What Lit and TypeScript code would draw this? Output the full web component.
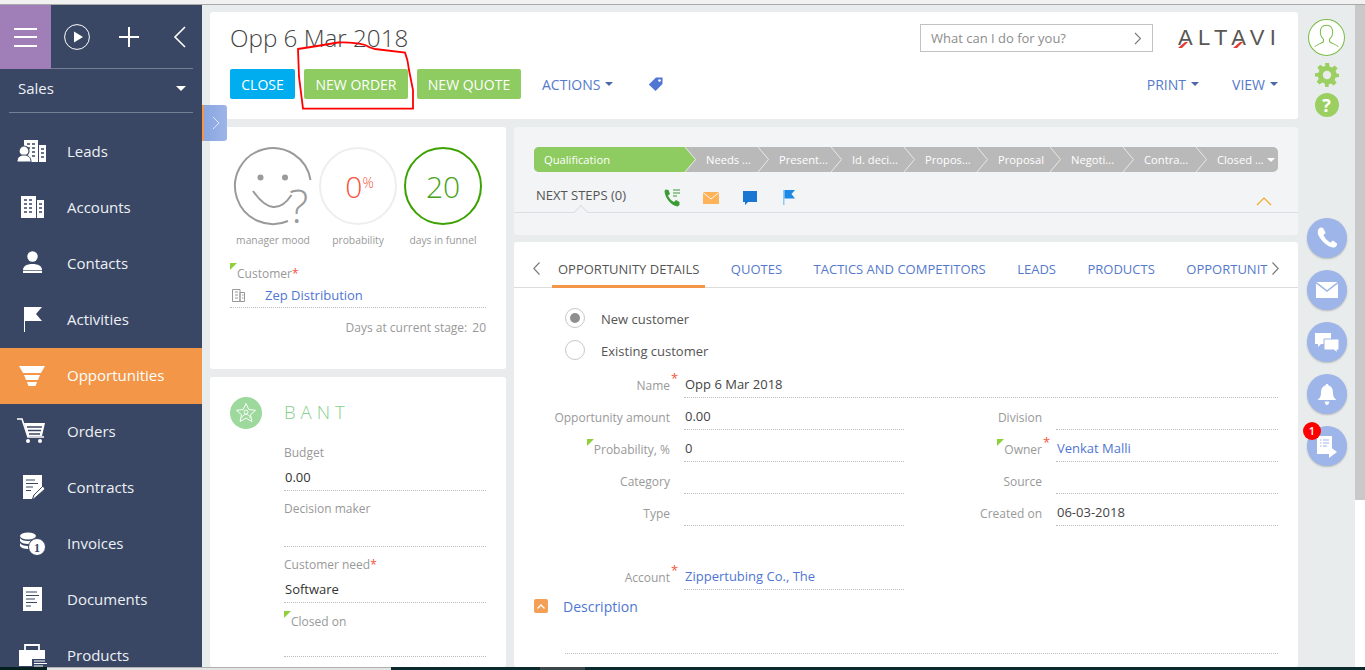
import { LitElement, html, css, svg } from "lit";
import { customElement } from "lit/decorators.js";

const BG = "#394764";
const icons: Record<string, unknown> = {
  leads: svg`<path d="M8 5h14v22H8zM23 10h7v17h-7z" fill="#fff"/><path d="M11 9h3M16 9h3M11 13h3M16 13h3M16 17h3M16 21h3M25 14h3M25 18h3M25 22h3" stroke="${BG}" stroke-width="1.4"/><circle cx="8" cy="16" r="5" fill="#fff" stroke="${BG}" stroke-width="1.2"/><path d="M1 27c0-5 3-7 7-7s7 2 7 7z" fill="#fff" stroke="${BG}" stroke-width="1"/>`,
  accounts: svg`<path d="M5 5h15v22H5zM21 9h7v18h-7z" fill="#fff"/><path d="M8 9h3M13 9h3M8 13h3M13 13h3M8 17h3M13 17h3M8 21h3M13 21h3M23 13h3M23 17h3M23 21h3" stroke="${BG}" stroke-width="1.4"/>`,
  contacts: svg`<circle cx="16.500" cy="9.500" r="5.200" fill="#fff"/><path d="M7 26v-3c0-4 4-6 9.500-6s9.500 2 9.500 6v3z" fill="#fff"/><path d="M7 23.500h19" stroke="${BG}" stroke-width=".7"/>`,
  activities: svg`<path d="M8 4h1v25H8z" fill="#fff"/><path d="M9 4h17l-6 7 6 7H9z" fill="#fff"/>`,
  opportunities: svg`<path d="M3 7h26l-4 7H7zM8 16h16l-2 5H10zM11 23h10l-1.500 4h-7z" fill="#fff"/>`,
  orders: svg`<path d="M1 4h5l6 18h16" fill="none" stroke="#fff" stroke-width="1.600"/><path d="M8 8h21l-3 13H12z" fill="#fff"/><path d="M11 12h15M12 15.500h13M13 19h11" stroke="${BG}" stroke-width="1.300"/><circle cx="12" cy="26" r="2" fill="#fff"/><circle cx="24" cy="26" r="2" fill="#fff"/>`,
  contracts: svg`<path d="M7 4h19v12l-9 9v3H7z" fill="#fff"/><path d="M10 9h9M10 12.500h12M10 16h7M10 19.500h5" stroke="${BG}" stroke-width="1.200"/><path d="M16 29l2-5 9-9 2 3-9 8z" fill="#fff" stroke="${BG}" stroke-width="1"/>`,
  invoices: svg`<ellipse cx="12" cy="9" rx="8" ry="3.500" fill="#fff"/><path d="M4 11c1 2 4 3 8 3s7-1 8-3v3c-1 2-4 3-8 3s-7-1-8-3zM4 16c1 2 4 3 8 3h2v3h-2c-4 0-7-1-8-3z" fill="#fff"/><circle cx="21" cy="20" r="8.500" fill="#fff" stroke="${BG}" stroke-width="1"/><text x="21" y="24.500" text-anchor="middle" font-family="Liberation Serif, serif" font-size="12" font-weight="700" fill="${BG}">1</text>`,
  documents: svg`<path d="M7 4h19v24H7z" fill="#fff"/><path d="M10 9h11M10 12.500h13M10 16h9M10 19.500h11M10 23h5" stroke="${BG}" stroke-width="1.200"/>`,
  products: svg`<path d="M9 11V6h14v5" fill="none" stroke="#fff" stroke-width="1.800"/><path d="M3 11h26v16H3z" fill="#fff"/><path d="M16 20h14v8H16z" fill="${BG}"/><path d="M18 22h11M18 24.500h13M18 27h9" stroke="#fff" stroke-width="1"/>`,
};
const nav = [
  ["leads", "Leads"], ["accounts", "Accounts"], ["contacts", "Contacts"], ["activities", "Activities"],
  ["opportunities", "Opportunities"], ["orders", "Orders"], ["contracts", "Contracts"], ["invoices", "Invoices"],
  ["documents", "Documents"], ["products", "Products"],
];
const steps = ["Needs ...", "Present...", "Id. deci...", "Propos...", "Proposal", "Negoti...", "Contra..."];
const tabs = ["QUOTES", "TACTICS AND COMPETITORS", "LEADS", "PRODUCTS"];

const sep = (c: string) => html`<svg class="sep" width="13" height="25" viewBox="0 0 13 25"><path d="M0 0L10.500 12.500L0 25" fill="${c}" stroke="#e9e9e9" stroke-width="1"/></svg>`;
const chev = (d: string, c: string, w = 7, h = 13) => html`<svg class="chev" width="${w}" height="${h}" viewBox="0 0 7 13"><path d="${d}" fill="none" stroke="${c}" stroke-width="1.100"/></svg>`;

@customElement("app-root")
export class AppRoot extends LitElement {
  static styles = css`
    :host { display: block; width: 1365px; height: 670px; overflow: hidden; font-family: "Open Sans", "Noto Sans", sans-serif; font-size: 13px; color: #444; background: #fff; }
    * { box-sizing: border-box; }
    .topstrip { height: 5px; background: #f1f1f1; border-bottom: 1px solid #a9a9a9; }
    .main { position: relative; display: flex; height: 662px; }
    .bottomstrip { display: flex; height: 3px; }
    .b1 { width: 47px; background: #06201f; }
    .b2 { width: 344px; background: #e4e4e4; border-top: 1px solid #b0b0b0; }
    .b3 { width: 149px; background: #0b2a2e; }
    .b4 { width: 45px; background: #3a4648; }
    .b5 { flex: 1; background: #0b2a2e; }

    .side { width: 202px; flex: none; background: #394764; color: #eef0f4; overflow: hidden; }
    .sidetop { display: flex; height: 63px; align-items: center; }
    .burger { width: 51px; height: 64px; margin-bottom: -1px; background: #a07fb8; display: flex; flex-direction: column; gap: 6.500px; align-items: center; justify-content: center; position: relative; }
    .burger i { display: block; width: 23px; height: 2px; background: #fff; }
    .sidetop svg { display: block; }
    .sidetools { display: flex; flex: 1; align-items: center; padding-left: 13px; }
    .plus { margin-left: 28px; }
    .back { margin-left: 33px; }
    .rule { height: 1px; background: #747e94; margin: 0 9px 0 9px; }
    .section { height: 43px; display: flex; align-items: center; justify-content: space-between; padding: 0 16px 5px 18px; font-size: 15px; }
    .caret-w { width: 0; height: 0; border: 5px solid transparent; border-top-color: #fff; border-bottom: 0; }
    .nav { margin-top: 11px; }
    .item { display: flex; align-items: center; height: 56px; padding: 0 0 2px 16px; font-size: 15px; }
    .item svg { flex: none; margin-right: 19px; }
    .item.on { background: #f39647; color: #fff; }

    .content { width: 1096px; flex: none; background: #e9eced; padding: 7px 0 0 8px; display: flex; flex-direction: column; gap: 8px; overflow: hidden; }
    .card { background: #fff; border-radius: 3px; }
    .head { height: 107px; padding: 12px 20px 0; flex: none; }
    .row1 { display: flex; align-items: center; height: 28px; }
    h1 { margin: 0; font-size: 24.200px; font-weight: 300; color: #444; line-height: 28px; flex: 1; }
    .search { width: 233px; height: 28px; border: 1px solid #c2c2c2; display: flex; align-items: center; justify-content: space-between; padding: 0 11px 0 10px; color: #8c8c8c; font-size: 13px; }
    .logo { position: relative; width: 100px; margin-left: 25px; font-family: "Liberation Sans", sans-serif; font-size: 22px; letter-spacing: 5.400px; color: #5a5654; line-height: 28px; white-space: nowrap; }
    .logo svg { position: absolute; left: 0; top: 0; }
    .toolbar { display: flex; align-items: center; margin-top: 17px; height: 30px; }
    .btn { height: 30px; border-radius: 2px; color: #fff; font-size: 14px; display: flex; align-items: center; justify-content: center; margin-right: 9px; }
    .blue { width: 65px; background: #00aeef; }
    .green { width: 104px; background: #8ecb60; }
    .menu { display: flex; align-items: center; gap: 5px; color: #5579cc; font-size: 14px; }
    .actions { margin-left: 12px; }
    .caret { width: 0; height: 0; border: 4.500px solid transparent; border-top-color: #4a68a8; border-bottom: 0; }
    .tag { margin-left: 35px; display: block; }
    .gapr { margin-left: auto; }
    .gapv { margin-left: 33px; }

    .cols { display: flex; gap: 8px; flex: 1; min-height: 0; }
    .lcol { width: 296px; display: flex; flex-direction: column; gap: 8px; }
    .rcol { width: 784px; display: flex; flex-direction: column; gap: 7px; }
    .stats-card { height: 242px; flex: none; padding: 20px 20px 0; }
    .stats { display: flex; gap: 7px; margin-left: 4px; }
    .stat { width: 78px; text-align: center; }
    .ring { width: 78px; height: 78px; border-radius: 50%; display: flex; align-items: center; justify-content: center; font-size: 30px; font-weight: 300; }
    .ring svg { display: block; overflow: visible; }
    .ring.p { border: 2px solid #eee; color: #f4553c; padding-left: 3px; }
    .ring.p sup { font-size: 14px; line-height: 1; align-self: flex-start; margin-top: 27px; font-weight: 300; }
    .ring.d { border: 2px solid #3ca200; color: #46a318; }
    .stat p { margin: 8px -6px 0; font-size: 10.300px; line-height: 15px; color: #999; white-space: nowrap; }
    .lab { color: #999; font-size: 12px; line-height: 18px; }
    .req-inline { color: #f4553c; }
    .tri { position: relative; }
    .tri::before { content: ""; position: absolute; left: -7px; top: -2px; border-top: 7px solid #8ed13c; border-right: 7px solid transparent; }
    .cust { margin-top: 17px; padding-left: 7px; }
    .custval { height: 25px; border-bottom: 1px dotted #bbb; display: flex; align-items: center; }
    .custval svg { margin: 0 20px 0 2px; }
    a { color: #4f76d3; text-decoration: none; }
    .days { margin-top: 11px; text-align: right; color: #999; font-size: 12px; line-height: 18px; }
    .days span { margin-left: 5px; }

    .bant { flex: 1; padding: 20px 20px 0; }
    .banthead { display: flex; align-items: center; gap: 22px; height: 32px; margin-bottom: 6px; }
    .bicon { width: 32px; height: 32px; border-radius: 50%; background: #9dd89d; display: flex; align-items: center; justify-content: center; }
    .btitle { font-size: 18.500px; font-weight: 300; letter-spacing: 5px; color: #86d08c; margin-bottom: 4px; }
    .field { margin-left: 54px; height: 56px; padding-top: 9px; border-bottom: 1px dotted #bbb; }
    .field.short { height: 54px; padding-top: 10px; }
    .field .lab { display: block; }
    .field .val { height: 20px; line-height: 20px; margin-top: 5px; padding-left: 1px; color: #333; }
    .shift { padding-left: 7px; }

    .process { height: 108px; flex: none; background: #f2f4f6; position: relative; }
    .bar { display: flex; height: 25px; margin: 20px 20px 0; background: #b9b9b9; border-radius: 5px; color: #fff; font-size: 11.200px; line-height: 26px; }
    .step { position: relative; width: 73px; padding-left: 21px; white-space: nowrap; flex: none; }
    .step.first { width: 151px; background: #8ecb60; border-radius: 5px 0 0 5px; padding-left: 10px; }
    .step.last { width: 81px; display: flex; align-items: center; justify-content: space-between; padding: 0 2px 0 21px; }
    .sep { position: absolute; left: 100%; top: 0; z-index: 1; }
    .caret-s { width: 0; height: 0; border: 4px solid transparent; border-top-color: #fff; border-bottom: 0; }
    .next { position: relative; height: 41px; border-bottom: 1px solid #dcdfe2; display: flex; align-items: flex-start; padding: 14px 26px 0 22px; font-size: 13px; line-height: 18px; color: #555; }
    .next::after { content: ""; position: absolute; left: 62px; bottom: -5px; width: 9px; height: 9px; background: #f2f4f6; border-left: 1px solid #dcdfe2; border-top: 1px solid #dcdfe2; transform: rotate(45deg); }
    .next svg { display: block; flex: none; margin-top: 2px; }
    .ni1 { margin-left: 37px; }
    .ni { margin-left: 19px; }
    .ni.nf { margin-left: 18px; }
    .next svg.collapse { margin: 11px 0 0 auto; }

    .details { flex: 1; padding: 0; overflow: hidden; }
    .tabs { display: flex; align-items: stretch; height: 46px; border-bottom: 1px solid #dcdcdc; padding: 0 19px; }
    .tab { position: relative; padding: 18px 6px 0; margin-right: 19.500px; color: #5579cc; font-size: 13px; line-height: 18px; white-space: nowrap; }
    .tab.on { color: #555; margin-left: 12px; }
    .tab.on::after { content: ""; position: absolute; left: 0; right: 0; bottom: -1px; height: 3px; background: #f39647; }
    .tab.clip { margin-right: 0; padding-right: 5px; }
    .tabs .chev { align-self: center; margin-top: 8px; flex: none; }
    .radios { padding: 14px 0 0 51px; }
    .radio { display: flex; align-items: center; height: 32px; gap: 16px; color: #555; }
    .radio span { padding-top: 2px; }
    .radio i { width: 20px; height: 20px; border-radius: 50%; border: 1px solid #c8c8c8; display: flex; align-items: center; justify-content: center; }
    .radio i b { width: 10px; height: 10px; border-radius: 50%; background: #8f8f8f; }
    .form { display: grid; grid-template-columns: 156px 234px 138px 236px; column-gap: 0; }
    .cell-l { height: 32px; text-align: right; color: #999; font-size: 12px; padding-top: 11px; line-height: 18px; white-space: nowrap; }
    .cell-l span { position: relative; display: inline-block; }
    .cell-l span.req::after { content: "*"; position: absolute; left: 100%; top: -6px; margin-left: 1px; color: #f4553c; font-size: 13px; line-height: 14px; }
    .cell-v { height: 32px; margin-left: 14px; border-bottom: 1px dotted #bbb; padding: 9px 0 0 1px; line-height: 18px; color: #444; }
    .wide { grid-column: 2 / 5; }
    .blank { grid-column: 1 / 5; height: 32px; }
    .desc { display: flex; align-items: center; gap: 15px; margin: 9px 0 0 20px; height: 14px; color: #4f76d3; font-size: 14px; }
    .descbox { width: 14px; height: 14px; border-radius: 2px; background: #f39f56; display: flex; align-items: center; justify-content: center; flex: none; }
    .descline { margin: 40px 20px 0 51px; border-bottom: 1px dotted #bbb; height: 1px; }

    .rail { width: 57px; flex: none; background: #e9eced; display: flex; flex-direction: column; align-items: center; padding: 14px 0 0 0; }
    .rail > svg { display: block; flex: none; }
    .gear { margin-top: 7px; }
    .help { margin-top: 6px; width: 24px; height: 24px; border-radius: 50%; background: #9ccf62; color: #fff; font-weight: 700; font-size: 18px; line-height: 24px; text-align: center; flex: none; }
    .circles { margin: 101px 0 0 1px; display: flex; flex-direction: column; gap: 12px; }
    .rc { position: relative; width: 40px; height: 40px; border-radius: 50%; background: #9db5e8; box-shadow: 0 1px 2px rgba(0,0,0,.22); display: flex; align-items: center; justify-content: center; }
    .badge { position: absolute; left: -4px; top: -4px; width: 18px; height: 18px; border-radius: 50%; background: #f00; color: #fff; font-size: 11px; font-weight: 600; line-height: 18px; text-align: center; }
    .scroll { width: 10px; flex: none; background: #fff; }
    .thumb { height: 495px; background: #c9c9c9; }

    .expander { position: absolute; left: 202px; top: 100px; width: 25px; height: 36px; background: linear-gradient(90deg, #8aa5e0, #9db5e8); border-left: 2px solid #f39647; border-radius: 0 3px 3px 0; display: flex; align-items: center; justify-content: center; }
    .scribble { position: absolute; left: 290px; top: 30px; pointer-events: none; }
  `;

  render() {
    return html`
      <div class="topstrip"></div>
      <div class="main">
        <aside class="side">
          <div class="sidetop">
            <div class="burger"><i></i><i></i><i></i></div>
            <div class="sidetools">
              <svg width="26" height="26" viewBox="0 0 26 26"><circle cx="13" cy="13" r="12.400" fill="none" stroke="#fff" stroke-width="1"/><path d="M10 7.500l9 5.500-9 5.500z" fill="#fff"/></svg>
              <svg class="plus" width="22" height="22" viewBox="0 0 22 22"><path d="M11 1v20M1 11h20" stroke="#fff" stroke-width="2"/></svg>
              <svg class="back" width="13" height="22" viewBox="0 0 13 22"><path d="M12 1L2 11l10 10" fill="none" stroke="#fff" stroke-width="1.600"/></svg>
            </div>
          </div>
          <div class="rule"></div>
          <div class="section"><span>Sales</span><span class="caret-w"></span></div>
          <div class="rule"></div>
          <nav class="nav">
            ${nav.map(([k, t]) => html`<div class="item ${k === "opportunities" ? "on" : ""}"><svg width="32" height="32" viewBox="0 0 32 32">${icons[k]}</svg>${t}</div>`)}
          </nav>
        </aside>

        <div class="content">
          <header class="card head">
            <div class="row1">
              <h1>Opp 6 Mar 2018</h1>
              <div class="search"><span>What can I do for you?</span>${chev("M1 1l5.500 5.500L1 12", "#777")}</div>
              <div class="logo">ALTAVI
                <svg width="100" height="28" viewBox="0 0 100 28"><path d="M0 24L7 18L10 18L4 24z" fill="#e8392f"/><path d="M55 24L62 18L65 18L59 24z" fill="#e8392f"/></svg>
              </div>
            </div>
            <div class="toolbar">
              <div class="btn blue">CLOSE</div>
              <div class="btn green">NEW ORDER</div>
              <div class="btn green">NEW QUOTE</div>
              <div class="menu actions">ACTIONS<span class="caret"></span></div>
              <svg class="tag" width="15" height="14" viewBox="0 0 15 14"><path d="M8 .500h6.500V7L7.500 14 .800 7.500z" fill="#4f76d3"/><circle cx="11.500" cy="3.500" r="1.300" fill="#fff"/></svg>
              <div class="menu gapr">PRINT<span class="caret"></span></div>
              <div class="menu gapv">VIEW<span class="caret"></span></div>
            </div>
          </header>

          <div class="cols">
            <div class="lcol">
              <section class="card stats-card">
                <div class="stats">
                  <div class="stat">
                    <div class="ring">
                      <svg width="78" height="78" viewBox="0 0 78 78">
                        <path d="M76.500 33A38 38 0 1 0 54 74" fill="none" stroke="#9a9a9a" stroke-width="2"/>
                        <circle cx="26.500" cy="30.500" r="3" fill="#9a9a9a"/><circle cx="51" cy="30.500" r="3" fill="#9a9a9a"/>
                        <path d="M19 44Q40 74 57.500 48" fill="none" stroke="#9a9a9a" stroke-width="2"/>
                        <text x="55" y="76" font-family="Open Sans, sans-serif" font-weight="300" font-size="46" fill="#9a9a9a">?</text>
                      </svg>
                    </div>
                    <p>manager mood</p>
                  </div>
                  <div class="stat"><div class="ring p">0<sup>%</sup></div><p>probability</p></div>
                  <div class="stat"><div class="ring d">20</div><p>days in funnel</p></div>
                </div>
                <div class="cust lab"><span class="tri">Customer<span class="req-inline">*</span></span></div>
                <div class="custval">
                  <svg width="13" height="13" viewBox="0 0 13 13"><path d="M.500.500h7.500v12H.500zM8 3.500h4.500v9H8zM3 3h3M3 6h3M3 9h3M10 6h1.500M10 9h1.500" fill="none" stroke="#999" stroke-width="1"/></svg>
                  <a>Zep Distribution</a>
                </div>
                <div class="days">Days at current stage:<span>20</span></div>
              </section>
              <section class="card bant">
                <div class="banthead">
                  <div class="bicon"><svg width="22" height="22" viewBox="0 0 22 22"><path d="M11 1.500l2.800 6 6.700.8-5 4.500 1.400 6.700-5.900-3.400-5.900 3.400 1.400-6.700-5-4.500 6.700-.8z" fill="none" stroke="#fff" stroke-width="1"/><circle cx="11" cy="10" r="2" fill="none" stroke="#fff" stroke-width=".9"/><path d="M7 16c0-2.500 2-3.500 4-3.500s4 1 4 3.500" fill="none" stroke="#fff" stroke-width=".9"/></svg></div>
                  <div class="btitle">BANT</div>
                </div>
                <div class="field"><span class="lab">Budget</span><div class="val">0.00</div></div>
                <div class="field"><span class="lab">Decision maker</span><div class="val"></div></div>
                <div class="field"><span class="lab">Customer need<span class="req-inline">*</span></span><div class="val">Software</div></div>
                <div class="field short"><span class="lab shift"><span class="tri">Closed on</span></span><div class="val"></div></div>
              </section>
            </div>

            <div class="rcol">
              <section class="card process">
                <div class="bar">
                  <div class="step first">Qualification${sep("#8ecb60")}</div>
                  ${steps.map((s) => html`<div class="step">${s}${sep("#b9b9b9")}</div>`)}
                  <div class="step last"><span>Closed ...</span><span class="caret-s"></span></div>
                </div>
                <div class="next">
                  <span>NEXT STEPS (0)</span>
                  <svg class="ni1" width="20" height="20" viewBox="0 0 20 20"><path d="M2.500 1.500l3 .5 1.500 4-2 1.500c1 2.500 3 5 6 6.500l2-2 3.500 2v3l-2 1.500C8 17.500 2 10 1.500 3z" fill="#3b9b35"/><path d="M10 2h7M10 5h7M10 8h4" stroke="#3b9b35" stroke-width="1.200"/></svg>
                  <svg class="ni nf" width="20" height="20" viewBox="0 0 20 20"><path d="M2 4h16v12H2z" fill="#ffb359"/><path d="M2 4.500l8 6.500 8-6.500" fill="none" stroke="#f2f4f6" stroke-width="1"/></svg>
                  <svg class="ni" width="20" height="20" viewBox="0 0 20 20"><path d="M3 3h14v11H8l-3 3v-3H3z" fill="#1976d2"/></svg>
                  <svg class="ni nf" width="20" height="20" viewBox="0 0 20 20"><path d="M5 2h1.500v15H5z" fill="#8ccbf5"/><path d="M6.500 2H17l-3.500 4 3.500 4.500H6.500z" fill="#1e88e5"/></svg>
                  <svg class="collapse" width="16" height="9" viewBox="0 0 16 9"><path d="M1 8l7-7 7 7" fill="none" stroke="#f5a623" stroke-width="1.100"/></svg>
                </div>
              </section>

              <section class="card details">
                <div class="tabs">
                  ${chev("M6.500 .500L.800 6.500l5.700 6", "#777", 7, 13)}
                  <div class="tab on">OPPORTUNITY DETAILS</div>
                  ${tabs.map((t) => html`<div class="tab">${t}</div>`)}
                  <div class="tab clip">OPPORTUNIT</div>
                  ${chev("M.500 .500L6.200 6.500l-5.700 6", "#777", 7, 13)}
                </div>
                <div class="radios">
                  <div class="radio"><i><b></b></i><span>New customer</span></div>
                  <div class="radio"><i></i><span>Existing customer</span></div>
                </div>
                <div class="form">
                  <div class="cell-l"><span class="req">Name</span></div><div class="cell-v wide">Opp 6 Mar 2018</div>
                  <div class="cell-l">Opportunity amount</div><div class="cell-v">0.00</div><div class="cell-l">Division</div><div class="cell-v"></div>
                  <div class="cell-l"><span class="tri">Probability, %</span></div><div class="cell-v">0</div><div class="cell-l"><span class="tri"><span class="req">Owner</span></span></div><div class="cell-v"><a>Venkat Malli</a></div>
                  <div class="cell-l">Category</div><div class="cell-v"></div><div class="cell-l">Source</div><div class="cell-v"></div>
                  <div class="cell-l">Type</div><div class="cell-v"></div><div class="cell-l">Created on</div><div class="cell-v">06-03-2018</div>
                  <div class="blank"></div>
                  <div class="cell-l"><span class="req">Account</span></div><div class="cell-v"><a>Zippertubing Co., The</a></div>
                </div>
                <div class="desc"><span class="descbox"><svg width="8" height="5" viewBox="0 0 8 5"><path d="M.500 4.500L4 1l3.500 3.500" fill="none" stroke="#fff" stroke-width="1.300"/></svg></span>Description</div>
                <div class="descline"></div>
              </section>
            </div>
          </div>
        </div>

        <aside class="rail">
          <svg width="37" height="37" viewBox="0 0 36 36"><circle cx="18" cy="18" r="17.500" fill="#fff" stroke="#7cbc4a" stroke-width="1"/><path d="M18 6c-4 0-6 3-6 6.500 0 3 1 5.500 3 7v2.500c-1 1.500-6 2.500-8.500 5M18 6c4 0 6 3 6 6.500 0 3-1 5.500-3 7v2.500c1 1.500 6 2.500 8.500 5" fill="none" stroke="#7cbc4a" stroke-width="1"/></svg>
          <svg class="gear" width="24" height="24" viewBox="0 0 24 24"><path d="M10 0h4l.6 3.400 2.300 1 2.900-2 2.800 2.800-2 2.900 1 2.300L24 11v3l-3.400.6-1 2.300 2 2.900-2.800 2.800-2.900-2-2.300 1L13.700 24h-3.400l-.6-3.400-2.300-1-2.900 2-2.800-2.800 2-2.900-1-2.300L0 13.700v-3.400l3.400-.6 1-2.300-2-2.900 2.800-2.800 2.900 2 2.300-1z" fill="#9ccf62"/><circle cx="12" cy="12" r="4.200" fill="#e9eced"/></svg>
          <div class="help">?</div>
          <div class="circles">
            <div class="rc"><svg width="24" height="24" viewBox="0 0 24 24"><path d="M4 2.500c1-1 3-1.500 4-.5l2.500 4.500c0 1-1 1.500-2 2.500 1 2.500 3.500 6 7 7.500 1-.5 1.500-1.500 2.500-2l4 3c.5 1-.5 2.500-1.500 3.500-1.500 1-4 .5-7-1C9 17.500 5 13 3 8.500 2.500 6 2.800 3.800 4 2.500z" fill="#fff"/></svg></div>
            <div class="rc"><svg width="22" height="16" viewBox="0 0 22 16"><path d="M0 0h22v16H0z" fill="#fff"/><path d="M0 .5L11 9 22 .5" fill="none" stroke="#9db5e8" stroke-width="1.500"/></svg></div>
            <div class="rc"><svg width="24" height="22" viewBox="0 0 24 22"><path d="M0 2h16v11H6l-3 3v-3H0z" fill="#fff"/><path d="M9 8h15v11h-2v3l-3-3H9z" fill="#fff" stroke="#9db5e8" stroke-width="1"/></svg></div>
            <div class="rc"><svg width="20" height="23" viewBox="0 0 20 23"><path d="M10 1c1 0 1.500.6 1.500 1.500C15 3.500 16 6.500 16 10c0 3 1 5 3.500 7H.500C3 15 4 13 4 10c0-3.500 1-6.500 4.500-7.500C8.500 1.600 9 1 10 1zM7.800 18.500h4.400c0 2-1 3.500-2.200 3.500s-2.200-1.500-2.200-3.500z" fill="#fff"/></svg></div>
            <div class="rc"><svg width="20" height="23" viewBox="0 0 20 23"><path d="M0 1h15v12l-3 0v6H0z" fill="#fff"/><path d="M12 11l8 6-8 6z" fill="#fff"/><path d="M3 5h1.500M6 5h6M3 8h1.500M6 8h6M3 11h1.500M6 11h4" stroke="#9db5e8" stroke-width="1"/></svg><span class="badge">1</span></div>
          </div>
        </aside>
        <div class="scroll"><div class="thumb"></div></div>

        <div class="expander"><svg width="8" height="14" viewBox="0 0 8 14"><path d="M1 1l6 6-6 6" fill="none" stroke="#dfe6f7" stroke-width="1"/></svg></div>
        <svg class="scribble" width="135" height="90" viewBox="0 0 135 90"><path d="M8 14Q28 11 48 7.500Q65 7 75 10Q80 13 85 14L115 17.700Q118 25 119 35L123 55L123 73.700L13 73.700L9 41.700Z" fill="none" stroke="#f00" stroke-width="1.800"/></svg>
      </div>
      <div class="bottomstrip"><div class="b1"></div><div class="b2"></div><div class="b3"></div><div class="b4"></div><div class="b5"></div></div>
    `;
  }
}
